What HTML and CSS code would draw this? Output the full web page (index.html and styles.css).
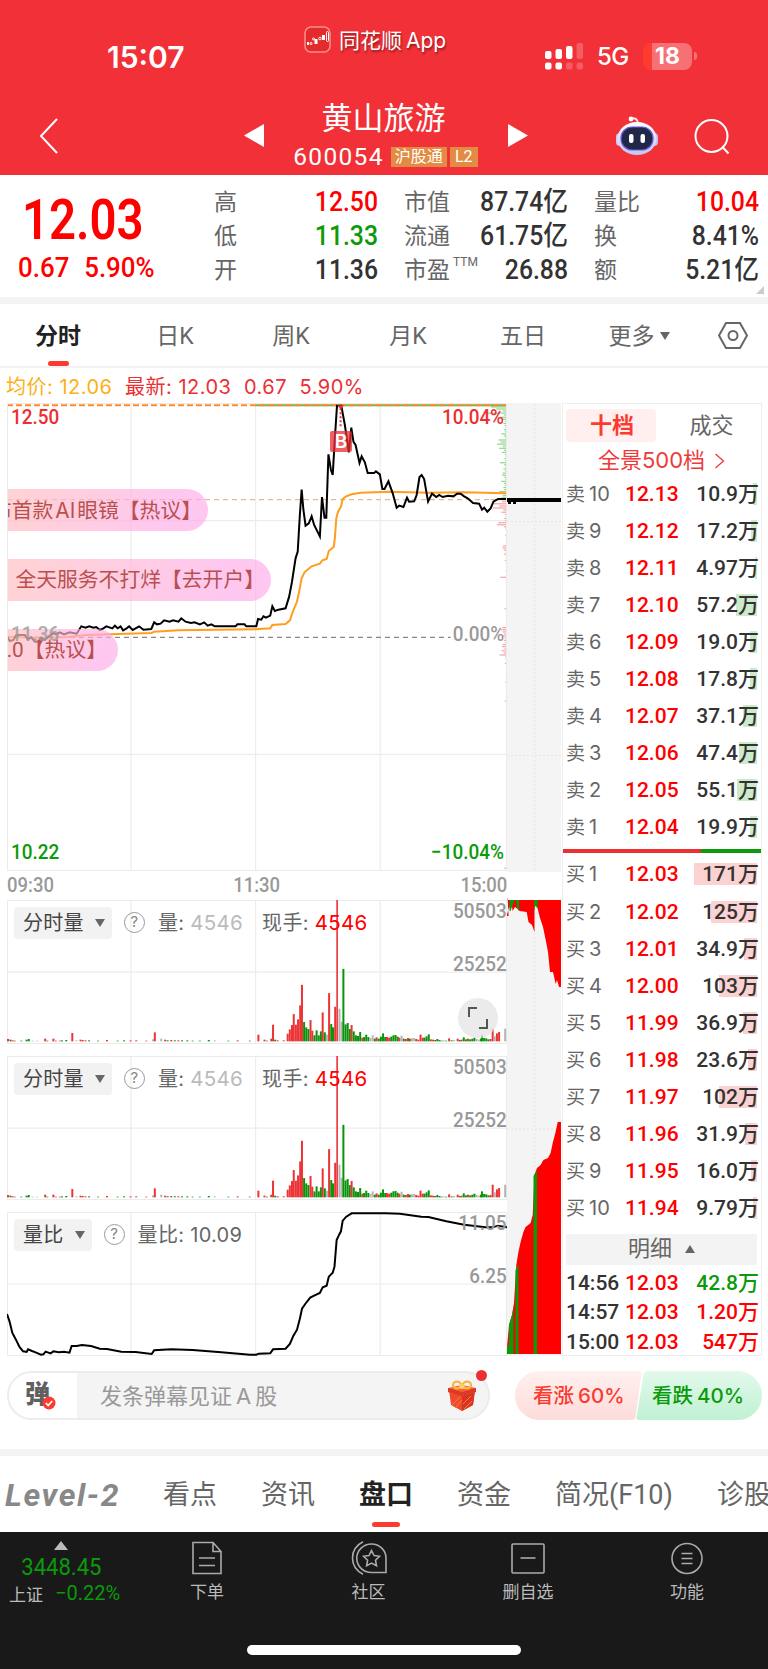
FILE: index.html
```
<!DOCTYPE html>
<html lang="zh-CN">
  <head>
    <meta charset="utf-8">
    <title>黄山旅游 600054</title>
    <link rel="stylesheet" href="styles.css">
  </head>
  <body>
    <header class="header">
      <div class="status-bar">
        <div class="time">15:07</div>
        <div class="app-name">
          <svg class="app-icon" width="27" height="27" viewBox="0 0 27 27">
            <rect x="1" y="1" width="25" height="25" rx="6" fill="#e52a2c" stroke="#f89090" stroke-width="1.5"/>
            <g fill="#fff"><rect x="3" y="16" width="2" height="3"/><rect x="10.500" y="13" width="3" height="5"/><rect x="18" y="9" width="3" height="5"/></g>
            <g fill="none" stroke="#fff"><circle cx="7" cy="17.500" r="1"/><circle cx="9.500" cy="13" r="1"/><circle cx="16" cy="12.500" r="1.300"/><rect x="22.500" y="5.500" width="2" height="10" rx="1"/></g>
          </svg>
          <span>同花顺<span class="latin">App</span></span>
        </div>
        <div class="signals">
          <svg width="38" height="27" viewBox="0 0 38 27" fill="#fff">
            <rect x="0" y="8" width="6.500" height="8" rx="2"/><rect x="10.500" y="6" width="6.500" height="10" rx="2"/><rect x="21" y="3" width="6.500" height="13" rx="2"/><rect x="31.500" y="0" width="6.500" height="16" rx="2" opacity=".22"/>
            <rect x="0" y="19.500" width="6.500" height="7" rx="2"/><rect x="10.500" y="19.500" width="6.500" height="7" rx="2"/><rect x="21" y="19.500" width="6.500" height="7" rx="2" opacity=".22"/><rect x="31.500" y="19.500" width="6.500" height="7" rx="2" opacity=".22"/>
          </svg>
          <span class="net">5G</span>
          <span class="battery">18</span>
        </div>
      </div>
      <div class="title-bar">
        <svg class="back" width="20" height="36" viewBox="0 0 20 36"><path d="M18 1 2 18l16 17" fill="none" stroke="#fff" stroke-width="2"/></svg>
        <svg class="tri" width="20" height="23" viewBox="0 0 20 23"><path d="M20 0v23L0 11.500z" fill="#fff"/></svg>
        <div class="stock">
          <div class="stock-name">黄山旅游</div>
          <div class="stock-code">600054<span class="tag tag-hgt">沪股通</span><span class="tag tag-l2">L2</span></div>
        </div>
        <svg class="tri" width="20" height="23" viewBox="0 0 20 23"><path d="M0 0v23l20-11.500z" fill="#fff"/></svg>
        <svg class="robot" width="42" height="40" viewBox="0 0 42 40">
          <defs><linearGradient id="head" x1="0" y1="0" x2="0" y2="1"><stop offset="0" stop-color="#fff"/><stop offset="1" stop-color="#c3c4ef"/></linearGradient></defs>
          <path d="M15 2.500c4-1 7 1 7 5" fill="none" stroke="#e9e6f7" stroke-width="2"/><circle cx="15" cy="3" r="2.400" fill="#fff"/>
          <rect x="0" y="17" width="8" height="13" rx="4" fill="#cfcdf0"/><rect x="34" y="17" width="8" height="13" rx="4" fill="#c3c0ee"/>
          <ellipse cx="21" cy="22.500" rx="19.500" ry="16.500" fill="url(#head)"/>
          <rect x="5" y="11" width="32" height="23" rx="11" fill="#212747" stroke="#6b5ce0" stroke-width="1.200"/>
          <rect x="13" y="18" width="4.500" height="9" rx="2" fill="#fff"/><rect x="24.500" y="18" width="4.500" height="9" rx="2" fill="#fff"/>
        </svg>
        <svg class="search" width="36" height="36" viewBox="0 0 36 36" fill="none" stroke="#fff" stroke-width="2"><circle cx="17.500" cy="17" r="16"/><path d="M28.500 28l6 6.500"/></svg>
      </div>
    </header>

    <section class="quote">
      <div class="last">
        <div class="last-price">12.03</div>
        <div class="last-change"><span>0.67</span><span>5.90%</span></div>
      </div>
      <div class="stat-grid">
        <span class="lbl">高</span><b class="red">12.50</b>
        <span class="lbl">市值</span><b>87.74亿</b>
        <span class="lbl">量比</span><b class="red">10.04</b>
        <span class="lbl">低</span><b class="green">11.33</b>
        <span class="lbl">流通</span><b>61.75亿</b>
        <span class="lbl">换</span><b>8.41%</b>
        <span class="lbl">开</span><b>11.36</b>
        <span class="lbl">市盈<sup>TTM</sup></span><b>26.88</b>
        <span class="lbl">额</span><b>5.21亿</b>
      </div>
      <i class="corner"></i>
    </section>

    <nav class="periods">
      <span class="active">分时</span>
      <span>日K</span>
      <span>周K</span>
      <span>月K</span>
      <span>五日</span>
      <span class="more">更多<i class="caret"></i></span>
      <svg width="30" height="27" viewBox="0 0 30 27" fill="none" stroke="#666" stroke-width="2"><path d="M8 1h14l7 12.500L22 26H8L1 13.500z"/><circle cx="15" cy="13.500" r="4.500"/></svg>
    </nav>

    <div class="legend">
      <span class="avg">均价: 12.06</span><span>最新: 12.03</span><span>0.67</span><span>5.90%</span>
    </div>

    <main class="market">
      <div class="charts">
        <div class="chart price-chart">
          <svg viewBox="20 24 1400 1404" preserveAspectRatio="none">
            <path class="grid" d="M367 24V1428M716 24V1428M1065 24V1428M20 377H1420M20 1078H1420"/>
            <g id="ticks"></g>
            <path class="line" stroke="#66b854" d="M716 31H1420"/>
            <path class="line" stroke="#ff8a26" stroke-dasharray="6 3" d="M20 31H1420"/>
            <path class="dash" stroke="#dcbf95" d="M20 314H1420"/>
            <path class="dash" stroke="#888" d="M20 727H1262"/>
            <polyline class="line avg-line" points="20,725 100,728 190,726 240,720 425,714 432,710 500,706 718,703 757,700 763,690 800,687 812,676 822,645 832,620 838,590 845,550 853,532 873,514 896,506 903,496 915,492 921,468 935,455 938,430 942,370 947,350 955,335 960,312 968,305 985,298 1010,293 1090,290 1200,293 1300,292 1420,295"/>
            <polyline class="line price-line" points="20,725 28,738 38,735 46,720 70,720 78,733 88,727 98,740 108,740 116,728 125,735 140,722 150,715 158,718 168,712 180,718 195,712 215,716 228,694 240,698 250,694 262,698 270,696 280,705 290,700 298,694 315,700 322,692 330,700 338,694 345,706 355,700 362,694 372,705 380,700 390,694 402,704 424,702 432,682 440,688 450,686 460,676 475,680 485,676 500,680 508,670 520,680 535,684 545,682 560,688 572,682 582,692 592,688 602,694 660,694 665,688 685,688 690,694 718,694 723,672 732,674 738,664 745,668 757,662 763,634 770,648 780,644 800,640 810,605 818,560 828,490 834,470 840,360 845,284 850,345 856,392 865,385 873,364 880,390 896,424 902,306 909,368 914,368 920,178 927,225 932,240 938,130 944,32 956,32 966,90 977,172 984,98 990,140 996,150 1007,204 1013,184 1022,202 1030,234 1048,234 1053,229 1064,238 1071,282 1077,282 1088,259 1100,295 1111,338 1118,332 1130,336 1140,308 1146,320 1160,319 1167,300 1175,246 1181,240 1188,252 1199,320 1210,296 1222,306 1230,300 1240,306 1255,302 1270,304 1280,296 1290,296 1300,304 1310,310 1325,324 1342,326 1350,344 1356,338 1365,350 1374,340 1382,320 1395,312 1420,312"/>
            <path d="M944 31h20l-10 12z" fill="#e8373a"/>
            <path class="line" stroke="#e8373a" stroke-dasharray="2 2" d="M954 40V100"/>
          </svg>
          <span class="axis red2 tl">12.50</span>
          <span class="axis red2 tr">10.04%</span>
          <span class="axis ml">11.36</span>
          <span class="axis mr">0.00%</span>
          <span class="axis green bl">10.22</span>
          <span class="axis green br">−10.04%</span>
          <span class="buy-mark">B</span>
          <div class="danmu danmu-1"><span>布首款<span class="latin">AI</span>眼镜【热议】</span></div>
          <div class="danmu danmu-2"><span>全天服务不打烊【去开户】</span></div>
          <div class="danmu danmu-3"><span>2.0【热议】</span></div>
        </div>
        <div class="times"><span>09:30</span><span>11:30</span><span>15:00</span></div>

        <div class="chart vol-chart">
          <svg viewBox="20 45 1400 433" preserveAspectRatio="none">
            <path class="grid" d="M367 45V478M716 45V478M1065 45V478M20 262H1420"/>
            <g class="volume"></g>
          </svg>
          <div class="ind"><span class="pick">分时量<i class="caret"></i></span><i class="help">?</i><span>量: <em>4546</em></span><span class="hand">现手: <em class="red">4546</em></span></div>
          <span class="axis tr2">50503</span><span class="axis mr2">25252</span>
          <span class="expand"><svg width="20" height="22" viewBox="0 0 20 22" fill="none" stroke="#555" stroke-width="2"><path d="M1 10V1h8M19 12v9h-8"/></svg></span>
        </div>

        <div class="chart vol-chart">
          <svg viewBox="20 45 1400 433" preserveAspectRatio="none">
            <path class="grid" d="M367 45V478M716 45V478M1065 45V478M20 262H1420"/>
            <g class="volume"></g>
          </svg>
          <div class="ind"><span class="pick">分时量<i class="caret"></i></span><i class="help">?</i><span>量: <em>4546</em></span><span class="hand">现手: <em class="red">4546</em></span></div>
          <span class="axis tr2">50503</span><span class="axis mr2">25252</span>
        </div>

        <div class="chart vol-chart">
          <svg viewBox="20 292 1400 432" preserveAspectRatio="none">
            <path class="grid" d="M367 292V724M716 292V724M1065 292V724M20 508H1420"/>
            <polyline class="line price-line" points="20,598 27,620 35,655 45,675 55,697 65,710 75,712 79,704 90,709 100,713 115,720 122,719 128,711 142,716 150,710 165,713 180,711 195,714 201,694 215,694 230,691 255,694 280,702 300,703 340,711 380,712 425,718 432,707 480,704 540,706 620,713 700,720 718,720 725,717 757,716 765,704 800,702 812,688 822,663 832,645 840,612 846,582 855,568 869,549 880,543 896,535 904,518 915,513 921,486 932,474 937,456 943,376 950,360 955,350 960,318 970,306 985,296 1080,296 1120,297 1180,306 1200,307 1250,320 1300,330 1360,338 1380,338 1395,333 1420,338"/>
          </svg>
          <div class="ind"><span class="pick">量比<i class="caret"></i></span><i class="help">?</i><span>量比: 10.09</span></div>
          <span class="axis tr2">11.05</span><span class="axis mr2">6.25</span>
        </div>
      </div>

      <svg class="depth" width="54" height="953" viewBox="0 -1 54 953">
        <path fill="#f4f4f4" d="M0-1h54v469H0zM0 496h54v457H0z"/>
        <path fill="none" stroke="#e6e6e6" stroke-dasharray="2 2" d="M28 0v468M28 497v457M0 117.500h54M0 351.500h54M0 725h54"/>
        <path stroke="#000" stroke-width="4" d="M0 96h54"/><path stroke="#000" stroke-width="2" stroke-dasharray="3 2" d="M1 99h9"/>
        <path fill="red" d="M0 496h54v87h-2l-2-7-1.300 4-2.700-12h-3l-2-20-2.300-12-2.700-13-3-9-2.500-10-1-2h-2v26l-2.500-7-3.500-3-1.800-10-7-1-2-2-2.700-2-2.400 4-1-7-3 5-2 7H1.600l-1-18z"/>
        <path fill="#0a9a0a" d="M2.500 496h5l-4 11h-1zM9 496h3v11l-2-3zM27 496h3.500v9l-2-4-1.500 6z"/>
        <path fill="red" d="M0 950v-7l2-22 3-10 2-12 2.300-38 2.100-13 2.200-10 2.800-10 2.200-5 5-4 2.100-8 1.800-40 2.500-7 3.600-3 2.800-5 4.600-2 2.600-5 2.100-10 2.900-11 2.100-10H54v232z"/>
        <path fill="#0a9a0a" d="M0 950v-7l2-2v-20l3-10v39zM5 911l1.500-8v47H5zM8.500 950v-84l3-6v90zM26.500 950V772l3.500-6v184z"/>
      </svg>

      <aside class="book">
        <div class="book-tabs"><span class="active">十档</span><span>成交</span></div>
        <div class="panorama">全景500档<svg width="11" height="16" viewBox="0 0 11 16"><path d="M1.500 1l8 7-8 7" fill="none" stroke="#ee3a3a" stroke-width="1.300"/></svg></div>
        <div class="rows sell" id="sell"></div>
        <div class="ratio"><i></i></div>
        <div class="rows buy" id="buy"></div>
        <div class="detail-head">明细<i class="caret up"></i></div>
        <div class="details">
          <div class="detail"><span>14:56</span><b>12.03</b><b class="green">42.8万</b></div>
          <div class="detail"><span>14:57</span><b>12.03</b><b>1.20万</b></div>
          <div class="detail"><span>15:00</span><b>12.03</b><b>547万</b></div>
        </div>
      </aside>
    </main>

    <section class="comment">
      <div class="comment-box">
        <div class="danmu-btn">弹<svg width="14" height="14" viewBox="0 0 14 14"><circle cx="7" cy="7" r="6.500" fill="#fb3a30"/><path d="M3.800 7l2.400 2.500 4-4.500" fill="none" stroke="#fff" stroke-width="1.800"/></svg></div>
        <span class="placeholder">发条弹幕见证<span class="latin">A</span>股</span>
        <svg class="gift" width="30" height="31" viewBox="0 0 30 31">
          <path d="M2 10l13 5 13-5-2 15-11 6L4 25z" fill="#ee4a2b"/><path d="M15 15l13-5-2 15-11 6z" fill="#d93420"/>
          <path d="M1 8l14-3 14 3v4l-14 4L1 12z" fill="#f6603a"/><path d="M1 8l14 4 14-4v4l-14 4L1 12z" fill="#dc3a26"/>
          <path d="M5 25l8-8M8 28l7-8M16 24l8-8M17 29l8-8" stroke="#ff7a4a"/>
          <g fill="none" stroke="#f7b63d" stroke-width="2.300"><ellipse cx="10" cy="5" rx="4" ry="3.300"/><ellipse cx="20" cy="5" rx="4" ry="3.300"/></g><circle cx="15" cy="6.500" r="2.500" fill="#ffd25c"/>
        </svg>
        <i class="dot"></i>
      </div>
      <div class="vote">
        <svg width="247" height="49" viewBox="0 0 247 49">
          <defs>
            <linearGradient id="up" x1="0" y1="0" x2="0" y2="1"><stop offset="0" stop-color="#fff0ef"/><stop offset="1" stop-color="#fddcda"/></linearGradient>
            <linearGradient id="down" x1="0" y1="0" x2="0" y2="1"><stop offset="0" stop-color="#e2f9eb"/><stop offset="1" stop-color="#c0f1d3"/></linearGradient>
          </defs>
          <path d="M24.500 0H124q3 0 2.500 3l-6 43q-.5 3-4 3h-92a24.500 24.500 0 010-49z" fill="url(#up)"/>
          <path d="M133 0h89.500a24.500 24.500 0 010 49H124q-3 0-2.500-3l7-42q.5-4 4.500-4z" fill="url(#down)"/>
        </svg>
        <span class="bull">看涨<span class="latin">60%</span></span><span class="bear">看跌<span class="latin">40%</span></span>
      </div>
    </section>

    <nav class="sections">
      <span class="level2">Level-2</span>
      <span>看点</span>
      <span>资讯</span>
      <span class="active">盘口</span>
      <span>资金</span>
      <span>简况(F10)</span>
      <span>诊股</span>
    </nav>

    <footer class="toolbar">
      <div class="tools">
        <div class="index">
          <i class="caret up"></i>
          <div class="index-value">3448.45</div>
          <div class="index-row"><span>上证</span><b>−0.22%</b></div>
        </div>
        <div class="tool">
          <svg width="32" height="34" viewBox="0 0 32 34"><path d="M2 1.500h20l8 9v22H2zM22 1.500v9h8M8 17h16M8 24.500h16"/></svg>下单
        </div>
        <div class="tool">
          <svg width="36" height="34" viewBox="0 0 36 34"><path d="M20.500 3A14.500 14 0 0 1 35 17v14.500H20.500A14.500 14 0 0 1 20.500 3zM12 .8C-2 8-2 26 12 33.200M20.500 9.500l2.600 5 5.400.8-4 3.900 1 5.500-5-2.600-4.900 2.600 1-5.500-4-3.900 5.400-.8z"/></svg>社区
        </div>
        <div class="tool">
          <svg width="34" height="34" viewBox="0 0 34 34"><rect x="1" y="3" width="32" height="29" rx="1"/><path d="M9.500 17h15"/></svg>删自选
        </div>
        <div class="tool">
          <svg width="32" height="34" viewBox="0 0 32 34"><circle cx="16" cy="17.500" r="15"/><path d="M10.500 12.500h11M10.500 17.500h11M10.500 22.500h11"/></svg>功能
        </div>
      </div>
      <div class="home-bar"></div>
    </footer>

    <script src="script.js"></script>
  </body>
</html>
```

FILE: styles.css
```
* {
  box-sizing: border-box;
}
body {
  margin: 0;
  width: 768px;
  height: 1669px;
  overflow: hidden;
  background: #fff;
  color: #333;
  font-family: Roboto, "Noto Sans CJK SC", sans-serif;
}
i, em {
  font-style: normal;
}
svg {
  display: block;
  flex: none;
}
.latin {
  margin: 0 4px;
  font-family: Inter, sans-serif;
}
.red { color: #f00 !important; }
.red2 { color: #ec2f33 !important; }
.green { color: #0a9a0a !important; }

/* header */
.header {
  height: 175px;
  background: #f23037;
  color: #fff;
}
.status-bar {
  display: grid;
  grid-template-columns: 304px 241px 1fr;
  height: 96px;
}
.time {
  padding: 40px 0 0 107px;
  font: 600 30px/35px Inter, sans-serif;
}
.app-name {
  display: flex;
  align-items: center;
  gap: 8px;
  height: 78px;
  font-size: 21px;
  text-shadow: 1px 2px 2px rgba(0, 0, 0, 0.4);
}
.signals {
  display: flex;
  align-items: center;
  height: 112px;
}
.net {
  width: 33px;
  margin: 2px 13px 0 14px;
  font: 500 24px/28px Inter, sans-serif;
  letter-spacing: -0.5px;
}
.battery {
  position: relative;
  width: 49px;
  height: 27px;
  border-radius: 8px;
  background: linear-gradient(90deg, #ff3b30 9px, #f77075 9px);
  font: 700 23px/27px Inter, sans-serif;
  text-align: center;
}
.battery::after {
  content: "";
  position: absolute;
  left: 51px;
  top: 9px;
  width: 3px;
  height: 8px;
  border-radius: 0 3px 3px 0;
  background: #f77075;
}
.title-bar {
  display: grid;
  grid-template-columns: 205px 20px 244px 108px 78px 36px;
  padding-left: 39px;
}
.back { margin-top: 22px; }
.tri { margin-top: 28px; }
.robot { margin-top: 20px; }
.search { margin-top: 23px; }
.stock {
  text-align: center;
}
.stock-name {
  height: 44px;
  padding-right: 5px;
  font-size: 31px;
  line-height: 46px;
}
.stock-code {
  display: flex;
  align-items: center;
  justify-content: center;
  height: 33px;
  padding-right: 1px;
  font-size: 24.5px;
  letter-spacing: 1.3px;
}
.tag {
  height: 20px;
  background: #e48b43;
  font-size: 16px;
  line-height: 20px;
  letter-spacing: 0;
}
.tag-hgt { width: 56px; margin: 0 3px 0 7px; }
.tag-l2 { width: 28px; }

/* quote */
.quote {
  position: relative;
  display: flex;
  height: 129px;
  border-bottom: 7px solid #f4f4f4;
}
.last {
  width: 214px;
  color: #f00;
  font-weight: 500;
}
.last-price {
  padding: 13px 0 0 22px;
  font-size: 55px;
  font-weight: 600;
  line-height: 64px;
  transform: scaleX(0.86);
  transform-origin: 22px 0;
}
.last-change {
  display: flex;
  gap: 16px;
  padding-left: 18px;
  font-size: 28px;
  line-height: 31px;
  transform: scaleX(0.925);
  transform-origin: 18px 0;
}
.stat-grid {
  display: grid;
  grid-template-columns: 40px 124px 26px 50px 114px 26px 50px 115px;
  grid-template-rows: repeat(3, 34px);
  padding-top: 10px;
  line-height: 34px;
}
.stat-grid .lbl:nth-child(6n + 1) { grid-column: 1; }
.stat-grid b:nth-child(6n + 2) { grid-column: 2; }
.stat-grid .lbl:nth-child(6n + 3) { grid-column: 4; }
.stat-grid b:nth-child(6n + 4) { grid-column: 5; }
.stat-grid .lbl:nth-child(6n + 5) { grid-column: 7; }
.stat-grid b:nth-child(6n) { grid-column: 8; }
.stat-grid .lbl {
  color: #666;
  font-size: 23px;
  line-height: 36px;
  white-space: nowrap;
}
.stat-grid b {
  font-size: 27.5px;
  font-weight: 500;
  text-align: right;
  white-space: nowrap;
  transform: scaleX(0.9);
  transform-origin: right;
}
.lbl sup {
  font-size: 12px;
  line-height: 0;
  margin-left: 3px;
  vertical-align: 12px;
}
.corner {
  position: absolute;
  right: 4px;
  bottom: 3px;
  border: 4.5px solid transparent;
  border-right-color: #ccc;
  border-bottom-color: #ccc;
}

/* period tabs */
.periods {
  display: grid;
  grid-template-columns: 116px 118px 114px 120px 110px 130px 60px;
  align-items: center;
  height: 64px;
  border-bottom: 2px solid #f2f2f2;
  color: #666;
  font-size: 23px;
  line-height: 62px;
  text-align: center;
}
.periods span {
  height: 62px;
  padding-top: 2px;
}
.periods .more { padding-right: 8px; }
.periods svg { margin-left: 10px; }
.periods .active {
  position: relative;
  color: #222;
  font-weight: 700;
}
.periods .active::after {
  content: "";
  position: absolute;
  left: 48px;
  bottom: 0;
  width: 21px;
  height: 5px;
  border-radius: 2.5px;
  background: #fb3a30;
}
.caret {
  display: inline-block;
  margin-left: 5px;
  border: 5.5px solid transparent;
  border-top: 8px solid #666;
  border-bottom: 0;
  vertical-align: 4px;
}
.caret.up {
  border-top: 0;
  border-bottom: 8px solid #666;
}
.legend {
  display: flex;
  gap: 12.5px;
  height: 35px;
  padding-left: 6px;
  color: #ec2f33;
  font: 20px/38px Inter, "Noto Sans CJK SC", sans-serif;
  letter-spacing: 0.5px;
}
.legend .avg { color: #fbb114; }

/* charts */
.market {
  display: flex;
  height: 953px;
  padding-left: 7px;
}
.charts { width: 500px; }
.chart {
  position: relative;
  border: 1px solid #ebebeb;
}
.chart > svg {
  position: absolute;
  inset: -1px;
  width: 500px;
  height: calc(100% + 2px);
}
.price-chart {
  height: 468px;
  overflow: hidden;
}
.vol-chart {
  height: 144px;
  margin-bottom: 12px;
}
.grid {
  fill: none;
  stroke: #ececec;
  stroke-width: 1.2;
  vector-effect: non-scaling-stroke;
}
.line, .dash {
  fill: none;
  stroke-width: 2;
  vector-effect: non-scaling-stroke;
}
.dash {
  stroke-width: 1.2;
  stroke-dasharray: 5 4;
}
.avg-line { stroke: #ff9d1c; }
.price-line { stroke: #000; }
.axis {
  position: absolute;
  color: #999;
  font-size: 21px;
  font-weight: 500;
  line-height: 22px;
  transform: scaleX(0.9);
}
.tl, .ml, .bl { left: 3px; transform-origin: left; }
.tr, .mr, .br { right: 2px; transform-origin: right; }
.tr2, .mr2 { right: -1px; transform-origin: right; }
.tl, .tr { top: 2px; }
.ml, .mr { top: 219px; }
.ml { z-index: 2; opacity: 0.8; }
.bl, .br { bottom: 7px; }
.tr2 { top: -1px; }
.mr2 { top: 52px; }
.buy-mark {
  position: absolute;
  left: 322px;
  top: 27px;
  width: 22px;
  height: 21px;
  border-radius: 2px;
  background: rgba(232, 45, 50, 0.75);
  color: #fff;
  font: 600 19px/21px Inter, sans-serif;
  text-align: center;
}
.danmu {
  position: absolute;
  left: -2px;
  display: flex;
  justify-content: flex-end;
  height: 42px;
  overflow: hidden;
  border-radius: 0 21px 21px 0;
  background: linear-gradient(110deg, rgba(255, 192, 192, 0.7), rgba(255, 170, 232, 0.65) 80%);
  color: #b9504f;
  font-size: 20.8px;
  line-height: 43px;
  white-space: nowrap;
}
.danmu .latin { margin: 0 2px; }
.danmu-1 { top: 85px; width: 202px; padding-right: 6px; }
.danmu-2 { top: 155px; width: 265px; padding-right: 6px; }
.danmu-3 { top: 225px; width: 112px; padding-right: 11px; }
.times {
  display: flex;
  justify-content: space-between;
  height: 29px;
  color: #999;
  font-size: 21px;
  font-weight: 500;
  line-height: 29px;
}
.times span { transform: scaleX(0.88); }
.times span:first-child { transform-origin: left; }
.times span:last-child { transform-origin: right; }
.ind {
  position: absolute;
  left: 6px;
  top: 6px;
  display: flex;
  align-items: center;
  height: 31px;
  color: #666;
  font: 20px/32px Inter, "Noto Sans CJK SC", sans-serif;
  letter-spacing: 0.3px;
}
.ind em { color: #bbb; font-size: 20.5px; }
.ind .hand { margin-left: 19px; }
.pick {
  padding: 0 7px 0 9px;
  height: 32px;
  border-radius: 4px;
  background: #f2f2f2;
  color: #444;
}
.pick .caret { margin-left: 11px; vertical-align: 3px; }
.help {
  width: 21px;
  height: 21px;
  margin: 0 13px 0 12px;
  border: 1.5px solid #999;
  border-radius: 50%;
  color: #888;
  font-size: 15px;
  line-height: 18px;
  text-align: center;
}
.expand {
  position: absolute;
  right: 8px;
  top: 97px;
  display: flex;
  align-items: center;
  justify-content: center;
  width: 40px;
  height: 40px;
  border-radius: 50%;
  background: rgba(228, 228, 228, 0.75);
}

/* order book */
.book {
  width: 200px;
  margin-left: 1px;
  padding: 5px 4px 0 3px;
  border: 1px solid #eee;
}
.book-tabs {
  display: flex;
  height: 33px;
  color: #666;
  font-size: 22px;
  line-height: 34px;
  text-align: center;
}
.book-tabs span {
  flex: 1;
  padding-left: 10px;
}
.book-tabs .active {
  flex: none;
  width: 90px;
  padding-left: 2px;
  border-radius: 4px;
  background: #fff0ef;
  color: #fb3a30;
  font-weight: 700;
}
.panorama {
  display: flex;
  align-items: center;
  justify-content: center;
  gap: 9px;
  height: 34px;
  padding-top: 3px;
  color: #ee3a3a;
  font: 22px/31px Inter, "Noto Sans CJK SC", sans-serif;
}
.row {
  position: relative;
  display: grid;
  grid-template-columns: 59px 60px 1fr;
  height: 37.05px;
  margin-right: -2px;
  font-size: 21px;
  line-height: 37px;
}
.row .level {
  color: #666;
  font-size: 19px;
  white-space: nowrap;
}
.row .level em {
  margin-left: 4px;
  font-family: Inter, sans-serif;
  font-size: 20px;
}
.row .price, .detail b {
  color: #f00;
  font-weight: 500;
}
.row .vol {
  position: relative;
  font-weight: 500;
  text-align: right;
}
.row .bar {
  position: absolute;
  right: 2px;
  top: 7px;
  height: 22px;
  background: #cdebcb;
}
.buy .bar { background: #fbd1d1; }
.ratio {
  height: 4px;
  margin: 3px -4px 3px -3px;
  background: #0a9a0a;
}
.ratio i {
  display: block;
  width: 138px;
  height: 4px;
  background: #ec2f33;
}
.detail-head {
  height: 31px;
  margin-top: 7px;
  background: #f3f3f3;
  color: #666;
  font-size: 22px;
  line-height: 30px;
  text-align: center;
}
.detail-head .caret { margin-left: 13px; vertical-align: 3px; }
.details { padding-top: 4px; }
.detail {
  display: grid;
  grid-template-columns: 59px 60px 1fr;
  margin-right: -2px;
  font-size: 21px;
  font-weight: 500;
  line-height: 29.5px;
}
.detail b:last-child { text-align: right; }

/* comment bar */
.comment {
  display: flex;
  justify-content: space-between;
  height: 100px;
  padding: 15px 6px 0 7px;
  border-bottom: 7px solid #f4f4f4;
}
.comment-box {
  position: relative;
  display: flex;
  align-items: center;
  width: 483px;
  height: 49px;
  border: 2px solid #ececec;
  border-radius: 25px;
  background: #f4f4f4;
}
.danmu-btn {
  position: relative;
  width: 68px;
  height: 45px;
  padding-left: 16px;
  border-radius: 23px 0 0 23px;
  background: #fff;
  color: #606060;
  font-size: 25px;
  font-weight: 900;
  line-height: 44px;
}
.danmu-btn svg {
  position: absolute;
  left: 33px;
  top: 23px;
}
.placeholder {
  flex: 1;
  padding: 0 0 3px 23px;
  color: #999;
  font-size: 22px;
}
.gift { margin-right: 11px; }
.dot {
  position: absolute;
  right: 1px;
  top: -3px;
  width: 11px;
  height: 11px;
  border-radius: 50%;
  background: #ec2f33;
}
.vote {
  position: relative;
  width: 247px;
}
.vote > span {
  position: absolute;
  top: 0;
  font: 500 20.5px/50px Inter, "Noto Sans CJK SC", sans-serif;
}
.vote .latin { margin: 0 0 0 4px; }
.bull { left: 18px; color: #fb3a30; }
.bear { right: 18px; color: #0a9a0a; }

/* section tabs */
.sections {
  display: flex;
  gap: 44px;
  height: 76px;
  padding-left: 5px;
  color: #666;
  font-size: 27px;
  line-height: 78px;
  white-space: nowrap;
}
.level2 {
  width: 114px;
  color: #888;
  font-size: 32px;
  font-style: italic;
  font-weight: 700;
  letter-spacing: 1.6px;
}
.sections .active {
  position: relative;
  color: #222;
  font-weight: 700;
}
.sections .active::after {
  content: "";
  position: absolute;
  left: 13px;
  bottom: 5px;
  width: 28px;
  height: 5px;
  border-radius: 2.5px;
  background: #fb3a30;
}

/* toolbar */
.toolbar {
  height: 137px;
  background: #191919;
  color: #bbb;
}
.tools {
  display: grid;
  grid-template-columns: 128px 158px 165px 154px 164px;
  height: 113px;
}
.index {
  padding-top: 9px;
  text-align: center;
}
.index .caret {
  display: block;
  width: 0;
  margin: 0 0 0 54px;
  border-width: 0 7.5px 9px;
  border-bottom-color: #bbb;
}
.index-value {
  margin-top: 3px;
  padding-right: 5px;
  color: #0a9a0a;
  font-size: 24px;
  line-height: 28px;
  transform: scaleX(0.92);
  transform-origin: 60px;
}
.index-row {
  display: flex;
  gap: 12px;
  padding-left: 9px;
  font-size: 17px;
  line-height: 28px;
}
.index-row b {
  color: #0a9a0a;
  font-size: 20px;
  font-weight: 400;
  line-height: 25px;
}
.tool {
  display: flex;
  flex-direction: column;
  align-items: center;
  padding-top: 9px;
  font-size: 17px;
  line-height: 34px;
}
.tool svg {
  fill: none;
  stroke: #aaa;
  stroke-width: 1.6;
}
.home-bar {
  width: 274px;
  height: 10px;
  margin: 0 auto;
  border-radius: 5px;
  background: #fff;
}
```

FILE: script.js
```
var NS = "http://www.w3.org/2000/svg";
var colors = { r: "#ec3336", g: "#0a930a", a: "#b5b5b5" };

function rect(parent, x, y, w, h, fill) {
  var el = document.createElementNS(NS, "rect");
  el.setAttribute("x", x);
  el.setAttribute("y", y);
  el.setAttribute("width", w);
  el.setAttribute("height", h);
  el.setAttribute("fill", fill);
  parent.appendChild(el);
}

// minute volume: position, height and direction
var volume = "23,7r 30,5g 36,3r 42,2r 60,2g 75,5g 81,7g 92,2a 104,2a 127,8r 133,2g 150,8r 157,2r 168,2r 174,3g 186,4g 203,25r 215,3a " +
  "226,5r 232,4r 240,3r 250,3g 275,2g 300,4r 330,2g 348,3g 366,3r 382,3r 410,2r 429,6a 434,27r 452,8a 463,5r 470,3g 480,4r 490,3g " +
  "500,3r 510,3g 525,3g 540,2g 560,2g 585,4g 602,3a 640,2g 666,3r 700,2g 724,20r 741,5r 748,2g 760,8r 765,50r 771,5g 778,3r 795,3r " +
  "806,23r 812,36r 818,49r 823,82r 829,50r 835,66r 841,108r 846,170r 852,58g 858,42g 864,37g 870,64r 875,32r 881,18g 887,33g " +
  "893,18g 899,30g 904,87r 910,27g 916,20a 922,145r 928,52g 933,42g 939,104r 951,98a 957,59a 962,218g 968,51g 974,55g 980,37g " +
  "985,49r 991,30g 997,18g 1003,16g 1009,28g 1015,11r 1020,13g 1026,20g 1032,13g 1038,10a 1044,18a 1050,8g 1055,12r 1061,8g " +
  "1067,14g 1073,24g 1079,13g 1084,13r 1090,11r 1096,14g 1102,18g 1108,19g 1114,14g 1119,11r 1125,17a 1131,8g 1137,7r 1143,10r " +
  "1148,8g 1154,9a 1160,10a 1166,7r 1172,5r 1178,20r 1184,11r 1189,11g 1195,15g 1201,21g 1207,6r 1213,5r 1219,4g 1225,7g 1231,4g " +
  "1237,2g 1243,3a 1250,2g 1258,9r 1265,3g 1272,4a 1282,8r 1288,4g 1293,5r 1299,12g 1305,6g 1311,8r 1317,6g 1323,8g 1329,11g " +
  "1335,7a 1341,5a 1347,8g 1350,18g 1356,10g 1362,9g 1368,6g 1374,7r 1380,38r 1386,15a 1392,24r 1398,28r 1415,38a 945,425r";

document.querySelectorAll(".volume").forEach(function(g) {
  volume.split(" ").forEach(function(item) {
    var p = item.split(",");
    var h = parseInt(p[1]);
    var x = Number(p[0]);
    rect(g, x - 2.9, 470 - h, h > 400 ? 4.5 : 5.6, h, colors[p[1].slice(-1)]);
  });
});

// trades by price, drawn against the right edge
var ticks = document.getElementById("ticks");
var up = [45, 30, 12, 55, 8, 20, 14, 6, 10, 7, 4, 9, 6, 16, 9, 5, 24, 18, 28, 12, 22, 8, 14, 6, 4, 7, 5, 20, 8, 5, 10, 6, 12, 14, 8, 5, 16, 9, 6, 10, 8, 22, 10, 12, 16];
up.forEach(function(w, i) {
  rect(ticks, 1420 - w, 34 + i * 6.2, w, 3.6, "#8fd68e");
});
var down = [46, 14, 38, 22, 40, 10, 16, 6, 4, 8, 5, 24, 28, 8, 4, 3, 3, 5, 2, 3, 2, 3, 11, 13, 9, 4, 8, 3, 2, 6, 2, 2, 3, 2, 4, 2, 1, 19, 2, 1, 1, 2, 1, 1, 1, 2, 1, 1, 1, 1, 1, 2, 7, 1, 1, 1, 2, 1, 1, 1, 3, 13, 17, 12, 8, 11, 6, 9, 5, 12, 14, 7, 15, 9, 21, 5, 4, 3, 6, 2, 1, 2, 1, 2, 1, 3, 1, 5, 2, 1, 1, 2, 1, 1, 2, 1, 6, 2];
down.forEach(function(w, i) {
  rect(ticks, 1420 - w, 312 + i * 6.3, w, 3.6, "#f6a5a5");
});
rect(ticks, 1413, 1418, 7, 4, "#f6a5a5");

// order book
var sell = [["12.13", "10.9"], ["12.12", "17.2"], ["12.11", "4.97"], ["12.10", "57.2"], ["12.09", "19.0"], ["12.08", "17.8"], ["12.07", "37.1"], ["12.06", "47.4"], ["12.05", "55.1"], ["12.04", "19.9"]];
var buy = [["12.03", "171"], ["12.02", "125"], ["12.01", "34.9"], ["12.00", "103"], ["11.99", "36.9"], ["11.98", "23.6"], ["11.97", "102"], ["11.96", "31.9"], ["11.95", "16.0"], ["11.94", "9.79"]];

function row(name, level, item) {
  return '<div class="row"><i class="bar" style="width:' + Math.round(item[1] * 0.37) + 'px"></i>' +
    '<span class="level">' + name + '<em>' + level + '</em></span>' +
    '<span class="price">' + item[0] + '</span><span class="vol">' + item[1] + '万</span></div>';
}
document.getElementById("sell").innerHTML = sell.map(function(item, i) { return row("卖", 10 - i, item); }).join("");
document.getElementById("buy").innerHTML = buy.map(function(item, i) { return row("买", i + 1, item); }).join("");
```
